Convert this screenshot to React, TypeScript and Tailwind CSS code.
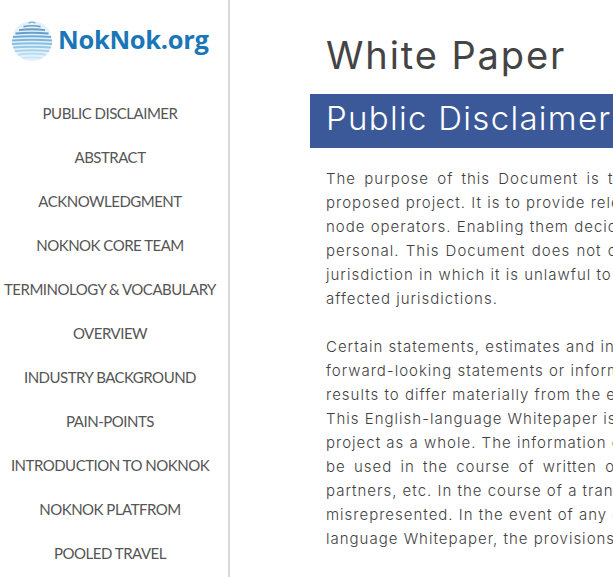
const navItems = [
  "PUBLIC DISCLAIMER",
  "ABSTRACT",
  "ACKNOWLEDGMENT",
  "NOKNOK CORE TEAM",
  "TERMINOLOGY & VOCABULARY",
  "OVERVIEW",
  "INDUSTRY BACKGROUND",
  "PAIN-POINTS",
  "INTRODUCTION TO NOKNOK",
  "NOKNOK PLATFROM",
  "POOLED TRAVEL",
]

const para1 = [
  { text: "The purpose of this Document is to", cls: "[word-spacing:3px]" },
  { text: "proposed project. It is to provide relevant", cls: "" },
  { text: "node operators. Enabling them deciding", cls: "" },
  { text: "personal. This Document does not constitute", cls: "[word-spacing:1px]" },
  { text: "jurisdiction in which it is unlawful to make", cls: "" },
  { text: "affected jurisdictions.", cls: "" },
]

const para2 = [
  { text: "Certain statements, estimates and information", cls: "" },
  { text: "forward-looking statements or information", cls: "" },
  { text: "results to differ materially from the estimates", cls: "" },
  { text: "This English-language Whitepaper is the", cls: "" },
  { text: "project as a whole. The information contained", cls: "" },
  { text: "be used in the course of written or oral", cls: "[word-spacing:3px]" },
  { text: "partners, etc. In the course of a translation", cls: "" },
  { text: "misrepresented. In the event of any conflict", cls: "" },
  { text: "language Whitepaper, the provisions of this", cls: "" },
]

function Globe() {
  const bands = [
    [21.5, 6, 1.2, "#7fa9cc"],
    [25, 16, 1.6, "#6f9fc8"],
    [28.5, 25, 1.9, "#659cc8"],
    [32, 32, 2, "#659fce"],
    [35.5, 37, 2, "#72aad6"],
    [39, 39, 2, "#80b4dc"],
    [42.5, 39, 2, "#8cbee2"],
    [46, 37, 2, "#98c8e8"],
    [49.5, 33, 2, "#a8d2ee"],
    [53, 27, 1.8, "#b6dbf2"],
    [56.5, 18, 1.4, "#c6e3f5"],
  ] as const
  return (
    <svg width="42" height="42" viewBox="19 19 42 42" className="shrink-0">
      <circle cx="40" cy="40" r="20" fill="#e3f1fa" />
      {bands.map(([y, w, h, c]) => (
        <path key={y} d={`M${40 - w / 2 - 0.5} ${y + 0.6}Q40 ${y - 1.2} ${40 + w / 2 + 0.5} ${y + 0.6}`} stroke={c} strokeWidth={h} fill="none" />
      ))}
    </svg>
  )
}

export default function App() {
  return (
    <div className="flex h-[577px] w-[613px] overflow-hidden bg-white">
      <aside className="h-full w-[230px] shrink-0 border-r-2 border-[#d9d9d9] pr-[8px]">
        <div className="flex h-[91px] items-start gap-[5px] pl-[11px] pt-[20px]">
          <Globe />
          <span className="mt-[1px] font-['Open_Sans',sans-serif] text-[25.5px] leading-[36px] font-bold tracking-[-0.3px] text-[#1a76b6]">NokNok.org</span>
        </div>
        <nav className="flex flex-col font-['Lato',sans-serif] text-[15px] tracking-[-0.5px] text-[#555555]">
          {navItems.map((item) => (
            <a key={item} className="flex h-[44px] items-center justify-center whitespace-nowrap">{item}</a>
          ))}
        </nav>
      </aside>
      <main className="min-w-0 flex-1 pl-[80px] font-['Inter',sans-serif]">
        <h1 className="h-[94px] pt-[29px] pl-[16px] text-[38px] leading-[52px] font-normal tracking-[1.9px] whitespace-nowrap text-[#444444]">White Paper</h1>
        <h2 className="flex h-[54px] items-center pb-[4px] pl-[16px] text-[33px] font-light tracking-[1.3px] whitespace-nowrap text-white bg-[#3b5998]">Public Disclaimer</h2>
        <div className="pt-[19px] pl-[16px] text-[15px] leading-[24px] font-light tracking-[1px] whitespace-nowrap text-[#3f3f3f]">
          {para1.map((l) => (
            <p key={l.text} className={l.cls}>{l.text}</p>
          ))}
          <div className="h-[24px]" />
          {para2.map((l) => (
            <p key={l.text} className={l.cls}>{l.text}</p>
          ))}
        </div>
      </main>
    </div>
  )
}
